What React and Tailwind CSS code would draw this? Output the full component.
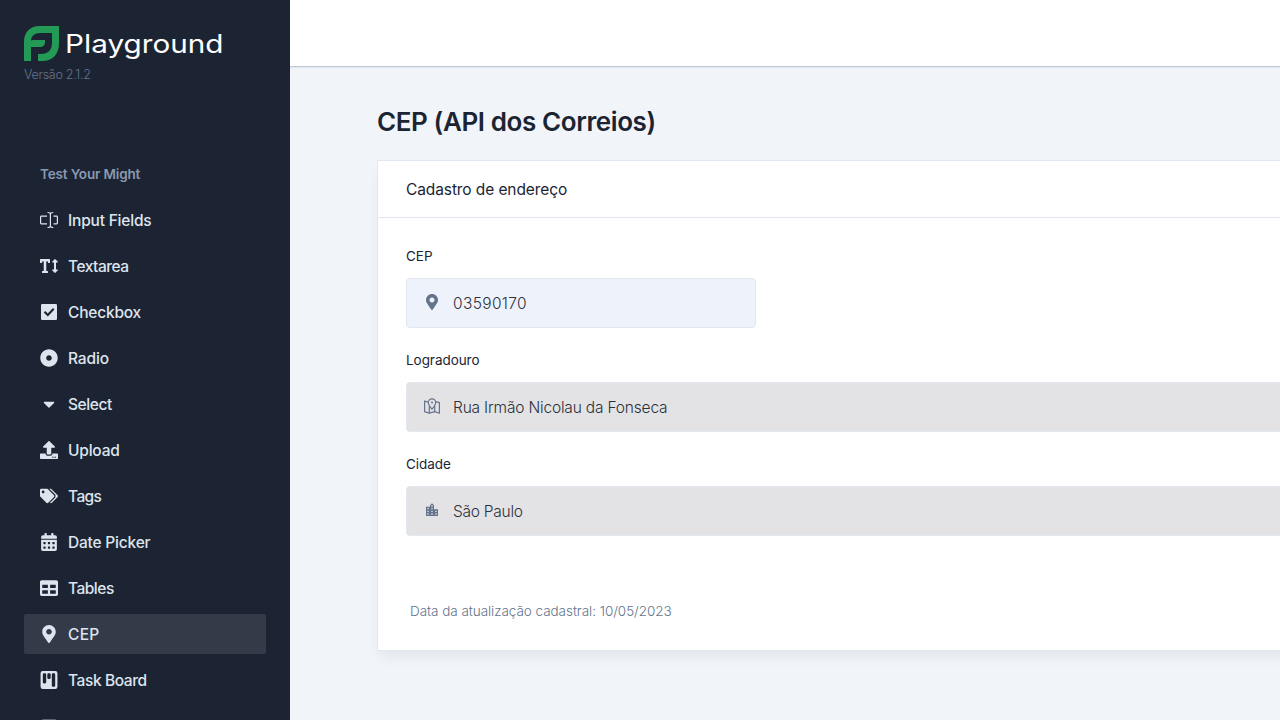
import { FaTextHeight, FaDotCircle, FaCaretDown, FaUpload, FaTags, FaCalendarAlt, FaTable, FaMapMarkerAlt } from "react-icons/fa";
import { BsKanbanFill } from "react-icons/bs";
import { MdLocationCity } from "react-icons/md";

function InputIcon({ size = 18 }) {
  return (
    <svg width={size} height={size} viewBox="0 0 18 18" fill="none" stroke="currentColor" strokeWidth="1.2" className="shrink-0">
      <path d="M7 5.100H1.400Q.6 5.100 .6 5.900V12.100Q.6 12.900 1.400 12.900H7M13.500 5.100h3.100q.8 0 .8.8v6.200q0 .8-.8.8h-3.100" />
      <path d="M7.500 1.500c1.800 0 2.900.5 2.900 1.800v11.400c0 1.300-1.100 1.800-2.900 1.800M13.300 1.500c-1.800 0-2.900.5-2.900 1.800v11.400c0 1.300 1.100 1.800 2.900 1.800" />
    </svg>
  );
}

function CheckIcon({ size = 18 }) {
  return (
    <svg width={size} height={size} viewBox="0 0 18 18" fill="none" className="shrink-0">
      <rect x="1" y="1" width="16" height="16" rx="1.200" fill="currentColor" />
      <path d="M4.500 8.800L7.800 12L13.700 5.800" stroke="#1c2434" strokeWidth="2.100" />
    </svg>
  );
}

function MapPinIcon({ size = 16 }) {
  return (
    <svg width={size} height={size} viewBox="0 0 16 16" fill="none" stroke="currentColor" strokeWidth="1.200" strokeLinejoin="round" className="relative -top-px shrink-0 text-[#64748b]">
      <path d="M8 11.200C6 8.800 4.300 6.800 4.300 4.500a3.700 3.700 0 0 1 7.400 0C11.700 6.800 10 8.800 8 11.200Z" />
      <circle cx="8" cy="4.600" r="1" fill="currentColor" stroke="none" />
      <path d="M4 4.100L.6 3V13.600L5.300 15.200L10.700 13.600L15.400 15.200V4.600L12 3.600M5.300 8.200V15.200M10.700 8.200V13.600" />
    </svg>
  );
}

const items = [
  { label: "Input Fields", Icon: InputIcon },
  { label: "Textarea", Icon: FaTextHeight, track: "tracking-[-0.5px]" },
  { label: "Checkbox", Icon: CheckIcon },
  { label: "Radio", Icon: FaDotCircle, track: "tracking-[-0.1px]" },
  { label: "Select", Icon: FaCaretDown, track: "tracking-[-0.4px]" },
  { label: "Upload", Icon: FaUpload },
  { label: "Tags", Icon: FaTags, track: "tracking-[-0.6px]" },
  { label: "Date Picker", Icon: FaCalendarAlt },
  { label: "Tables", Icon: FaTable, track: "tracking-[-0.5px]" },
  { label: "CEP", Icon: FaMapMarkerAlt, active: true, track: "tracking-[0.3px]" },
  { label: "Task Board", Icon: BsKanbanFill, track: "tracking-[-0.4px]" },
];

function Logo() {
  return (
    <div className="flex h-[37px] items-start">
      <svg width="35" height="35" viewBox="0 0 35 35" fill="#239a56" className="shrink-0">
        <path fillRule="evenodd" d="M0 35V16C0 6 6 0 16 0H35V17C35 28 29 35 18 35H14V28H17C24 28 28 24 28 17V7H16C11 7 7 10 7 14.500C8.500 14 10 14 11 14H21V16C21 19.500 19 21 16 21H7V35Z" />
      </svg>
      <svg width="164" height="40" viewBox="0 0 164 40" className="shrink-0">
        <text x="6" y="27" textLength="158.500" lengthAdjust="spacingAndGlyphs" fill="#fff" fontSize="25.500" className="font-['Inter',sans-serif]">Playground</text>
      </svg>
    </div>
  );
}

function Field({ label, value, Icon, small, track }) {
  return (
    <div>
      <div className="h-[22px] text-[13.5px] leading-[22px] tracking-[-0.05px] text-[#1c2434]">{label}</div>
      <div className={small
        ? "mt-[11px] flex h-[50px] w-[350px] items-center rounded-[4px] border border-[#e2e8f0] bg-[#eef3fb] pl-[17px]"
        : "mt-[11px] flex h-[50px] w-[1000px] items-center rounded-[4px] border border-[#e2e8f0] bg-[#e3e3e5] pl-[17px]"}>
        <Icon size={16} className="relative -top-px shrink-0 text-[#64748b]" />
        <span className={`ml-[13px] pt-[2px] text-[15.5px] font-light text-[#2b303b] ${track}`}>{value}</span>
      </div>
    </div>
  );
}

export default function App() {
  return (
    <div className="flex h-screen w-screen overflow-hidden bg-[#f1f5f9] font-['Inter','Noto_Sans',sans-serif] text-[#1c2434]">
      <aside className="flex w-[290px] shrink-0 flex-col overflow-hidden bg-[#1c2434] px-6 pt-[26px]">
        <Logo />
        <div className="mt-[2px] h-5 text-[12.5px] font-light leading-5 tracking-[-0.28px] text-[#64748b]">Versão 2.1.2</div>
        <div className="mt-[79px] pl-4 text-[13.5px] font-semibold leading-5 tracking-[-0.15px] text-[#8a99af]">Test Your Might</div>
        <nav className="mt-4 flex flex-col gap-[6px]">
          {items.map(({ label, Icon, active, track = "tracking-[-0.2px]" }) => (
            <div key={label} className={active
              ? "flex h-10 shrink-0 items-center gap-[10px] rounded-[2px] bg-[#333a48] px-4 text-[#dee4ee]"
              : "flex h-10 shrink-0 items-center gap-[10px] rounded-[2px] px-4 text-[#dee4ee]"}>
              <Icon size={18} className="shrink-0" />
              <span className={`pt-[2px] text-[15.5px] font-medium ${track}`}>{label}</span>
            </div>
          ))}
          <div className="flex h-10 shrink-0 items-start px-[18px] pt-[13px] text-[#8a919d]">
            <svg width="14" height="18" viewBox="0 0 14 18" fill="#5c6371"><rect width="14" height="18" rx="1" /></svg>
          </div>
        </nav>
      </aside>
      <div className="flex min-w-0 flex-1 flex-col overflow-hidden">
        <header className="z-10 h-[66px] shrink-0 bg-white shadow-[0_1px_1px_rgba(160,175,195,0.6),0_2px_3px_rgba(0,0,0,0.04)]" />
        <main className="pl-[87px] pt-[38px]">
          <h1 className="h-9 text-[26px] font-semibold leading-9 tracking-[-0.4px]">CEP (API dos Correios)</h1>
          <section className="mt-5 h-[491px] w-[1100px] border border-[#e2e8f0] bg-white shadow-[0_8px_13px_-3px_rgba(0,0,0,0.07)]">
            <div className="flex h-[57px] items-center border-b border-[#e2e8f0] pl-7 pt-[2px] text-[15.5px] tracking-[-0.1px]">Cadastro de endereço</div>
            <div className="flex flex-col gap-[21px] pl-7 pt-[27px]">
              <Field label="CEP" value="03590170" Icon={FaMapMarkerAlt} small track="tracking-[0.35px]" />
              <Field label="Logradouro" value="Rua Irmão Nicolau da Fonseca" Icon={MapPinIcon} track="tracking-[-0.18px]" />
              <Field label="Cidade" value="São Paulo" Icon={MdLocationCity} track="tracking-[-0.25px]" />
            </div>
            <div className="mt-16 pl-8 text-[13.5px] font-light leading-[22px] tracking-[-0.05px] text-[#64748b]">Data da atualização cadastral: 10/05/2023</div>
          </section>
        </main>
      </div>
    </div>
  );
}
